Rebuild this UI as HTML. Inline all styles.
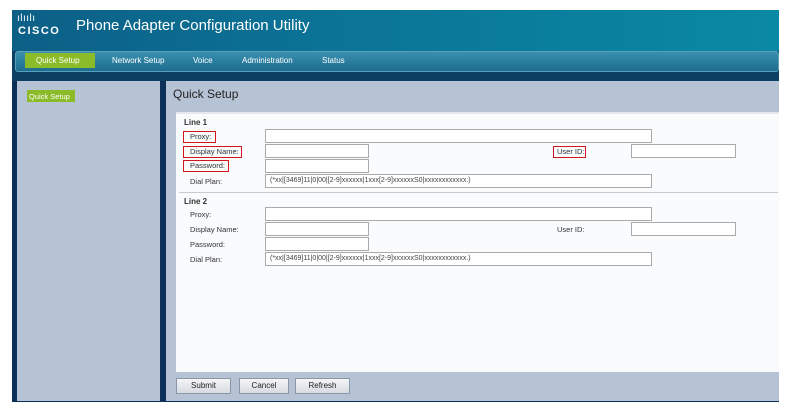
<!DOCTYPE html>
<html><head><style>
*{margin:0;padding:0;box-sizing:border-box}
body{width:793px;height:406px;background:#fff;position:relative;overflow:hidden;font-family:"Liberation Sans",sans-serif}
.a{position:absolute}
.hdr{left:12px;top:10px;width:767px;height:41px;background:linear-gradient(90deg,#0d5f86 0%,#0b7396 40%,#0a89a4 100%)}
.nav{left:12px;top:51px;width:767px;height:30px;background:#0c3f62}
.navin{left:15px;top:51px;width:764px;height:21px;background:linear-gradient(#3a8fae,#1d6d90);border-radius:3px;border:1px solid #5a9fbb}
.tab{top:56px;font-size:8px;color:#fff}
.frame{left:12px;top:71px;width:767px;height:331px;background:#0c3158}
.side{left:17px;top:81px;width:143px;height:320px;background:#b6c3d5}
.main{left:166px;top:81px;width:613px;height:320px;background:#b6c3d5}
.box{left:176px;top:112px;width:603px;height:260px;background:#fafbfd;border-top:2px solid #e5e8ee}
.lbl{font-size:7.5px;color:#333}
.in{height:14px;border:1px solid #aaa;background:#fff;font-size:7px;color:#444;padding:2px 4px;white-space:nowrap}
.red{border:1.5px solid #d4141c}
.btn{top:378px;height:16px;border:1px solid #8a97a8;background:linear-gradient(#f4f5f7,#d6dbe2);font-size:8px;color:#222;text-align:center;line-height:14px}
</style></head><body>
<div class="a hdr"></div>
<div class="a" style="left:17px;top:14px;color:#fff;font-size:10px;letter-spacing:0.5px;line-height:10px">ılıılı</div>
<div class="a" style="left:18px;top:25px;color:#fff;font-size:11px;font-weight:bold;letter-spacing:1.5px">CISCO</div>
<div class="a" style="left:76px;top:17px;color:#fff;font-size:15px">Phone Adapter Configuration Utility</div>
<div class="a frame"></div>
<div class="a nav"></div>
<div class="a navin"></div>
<div class="a" style="left:25px;top:53px;width:70px;height:15px;background:#8cbb2a"></div>
<div class="a tab" style="left:36px">Quick Setup</div>
<div class="a tab" style="left:112px">Network Setup</div>
<div class="a tab" style="left:193px">Voice</div>
<div class="a tab" style="left:242px">Administration</div>
<div class="a tab" style="left:322px">Status</div>
<div class="a side"></div>
<div class="a" style="left:27px;top:90px;width:48px;height:12px;background:#8cbb2a;color:#fff;font-size:7.5px;padding:2px 2px">Quick Setup</div>
<div class="a main"></div>
<div class="a" style="left:173px;top:87px;font-size:12px;color:#222">Quick Setup</div>
<div class="a box"></div>
<div class="a lbl" style="left:184px;top:118px;font-weight:bold;font-size:8px">Line 1</div>
<div class="a lbl red" style="left:183px;top:131px;width:33px;height:12px;padding-left:6px">Proxy:</div>
<div class="a lbl red" style="left:183px;top:146px;width:59px;height:12px;padding-left:6px">Display Name:</div>
<div class="a lbl red" style="left:183px;top:160px;width:46px;height:12px;padding-left:6px">Password:</div>
<div class="a lbl" style="left:190px;top:177px">Dial Plan:</div>
<div class="a lbl red" style="left:553px;top:146px;width:33px;height:12px;padding-left:3px">User ID:</div>
<div class="a in" style="left:265px;top:129px;width:387px"></div>
<div class="a in" style="left:265px;top:144px;width:104px"></div>
<div class="a in" style="left:631px;top:144px;width:105px"></div>
<div class="a in" style="left:265px;top:159px;width:104px"></div>
<div class="a in" style="left:265px;top:174px;width:387px">(*xx|[3469]11|0|00|[2-9]xxxxxx|1xxx[2-9]xxxxxxS0|xxxxxxxxxxxx.)</div>
<div class="a" style="left:179px;top:192px;width:599px;height:1px;background:#c5cad3"></div>
<div class="a lbl" style="left:184px;top:197px;font-weight:bold;font-size:8px">Line 2</div>
<div class="a lbl" style="left:190px;top:210px">Proxy:</div>
<div class="a lbl" style="left:190px;top:225px">Display Name:</div>
<div class="a lbl" style="left:190px;top:240px">Password:</div>
<div class="a lbl" style="left:190px;top:255px">Dial Plan:</div>
<div class="a lbl" style="left:557px;top:225px">User ID:</div>
<div class="a in" style="left:265px;top:207px;width:387px"></div>
<div class="a in" style="left:265px;top:222px;width:104px"></div>
<div class="a in" style="left:631px;top:222px;width:105px"></div>
<div class="a in" style="left:265px;top:237px;width:104px"></div>
<div class="a in" style="left:265px;top:252px;width:387px">(*xx|[3469]11|0|00|[2-9]xxxxxx|1xxx[2-9]xxxxxxS0|xxxxxxxxxxxx.)</div>
<div class="a btn" style="left:176px;width:55px">Submit</div>
<div class="a btn" style="left:239px;width:50px">Cancel</div>
<div class="a btn" style="left:295px;width:55px">Refresh</div>
</body></html>
